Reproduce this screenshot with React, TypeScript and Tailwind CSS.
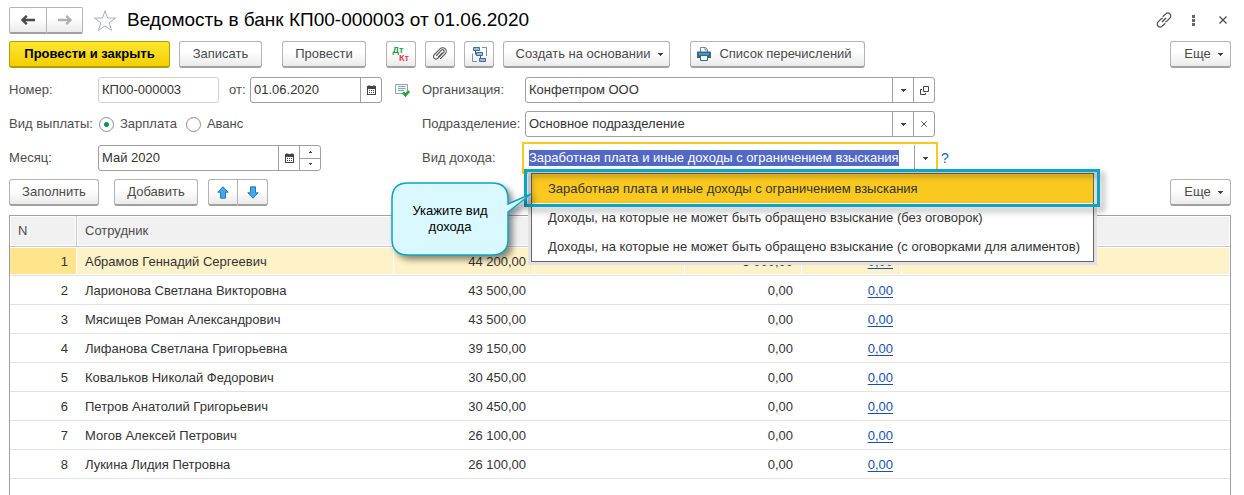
import { ReactNode } from 'react'
import clsx from 'clsx'

interface IEmployeeRow {
  name: string
  amount: string
  withheld: string
  link: string
}

const employees: IEmployeeRow[] = [
  { name: 'Абрамов Геннадий Сергеевич', amount: '44 200,00', withheld: '3 000,00', link: '0,00' },
  { name: 'Ларионова Светлана Викторовна', amount: '43 500,00', withheld: '0,00', link: '0,00' },
  { name: 'Мясищев Роман Александрович', amount: '43 500,00', withheld: '0,00', link: '0,00' },
  { name: 'Лифанова Светлана Григорьевна', amount: '39 150,00', withheld: '0,00', link: '0,00' },
  { name: 'Ковальков Николай Федорович', amount: '30 450,00', withheld: '0,00', link: '0,00' },
  { name: 'Петров Анатолий Григорьевич', amount: '30 450,00', withheld: '0,00', link: '0,00' },
  { name: 'Могов Алексей Петрович', amount: '26 100,00', withheld: '0,00', link: '0,00' },
  { name: 'Лукина Лидия Петровна', amount: '26 100,00', withheld: '0,00', link: '0,00' },
]

const incomeKinds = [
  'Заработная плата и иные доходы с ограничением взыскания',
  'Доходы, на которые не может быть обращено взыскание (без оговорок)',
  'Доходы, на которые не может быть обращено взыскание (с оговорками для алиментов)',
]

const buttonFace =
  'flex h-[27px] items-center justify-center border border-b-2 border-[#b3b3b3] border-b-[#a0a0a0] bg-linear-to-b from-white from-40% to-[#ebebeb] text-[#4a4a4a]'

// Icons

function Caret() {
  return (
    <svg width="5" height="3" viewBox="0 0 5 3" fill="#444" className="shrink-0">
      <path d="M0 0h5v1H4v1H3v1H2V2H1V1H0z" />
    </svg>
  )
}

function ArrowIcon({ className }: { className?: string }) {
  return (
    <svg width="14" height="10" viewBox="0 0 14 10" className={className}>
      <path d="M1.200 5H14M5.800 .8L1.500 5l4.300 4.200" fill="none" stroke="currentColor" strokeWidth="2.400" />
    </svg>
  )
}

function StarIcon() {
  return (
    <svg width="24" height="23" viewBox="0 0 24 23" fill="none" stroke="#a9afb5">
      <path d="M12 1.800l2.500 7.200 8 .1-6.400 4.700 2.500 7.700L12 16.900l-6.600 4.600 2.500-7.700L1.500 9.100l8-.1z" />
    </svg>
  )
}

function LinkIcon() {
  return (
    <svg width="16" height="16" viewBox="0 0 16 16" fill="none" stroke="#4d4d4d" strokeWidth="1.200">
      <path d="M6.700 4.700l2.800-2.600c1.400-1.300 3-1.500 4.300-.3s1.300 3 0 4.300l-2.600 2.700c-.6.600-1.200.8-2 .8" />
      <path d="M9.300 11.300l-2.800 2.600c-1.400 1.300-3 1.500-4.300.3s-1.300-3 0-4.300l2.600-2.700c.6-.6 1.200-.8 2-.8" />
      <path d="M6 10l4-4" />
    </svg>
  )
}

function DotsIcon() {
  return (
    <svg width="3" height="11" viewBox="0 0 3 11" fill="#666">
      <path d="M0 0h3v3H0zM0 4h3v3H0zM0 8h3v3H0z" />
    </svg>
  )
}

function CrossIcon({ size }: { size: number }) {
  return (
    <svg width={size} height={size} viewBox="0 0 8 8" stroke="#4d4d4d" strokeWidth="1.300">
      <path d="M.5 .5l7 7M7.500 .5l-7 7" />
    </svg>
  )
}

function ClipIcon() {
  return (
    <svg width="14" height="14" viewBox="0 0 14 14" fill="none" stroke="#555" strokeWidth="1.100" strokeLinecap="round">
      <path d="M3.500 8.500l5-5.300a1.500 1.500 0 0 1 2.200 2.100L5 11.200a2.500 2.500 0 0 1-3.700-3.500L7 1.800a3.600 3.600 0 0 1 5.200 5L7.500 11.700" />
      <path d="M9.300 5.800l-3.800 4" />
    </svg>
  )
}

function StructureIcon() {
  return (
    <svg width="15" height="15" viewBox="0 0 15 15" fill="#9dbcdb" stroke="#3f6c9c">
      <path d="M3.500 3.500v4h2M8.500 9v3" fill="none" />
      <path d="M1.500 .5h6v3h-6zM4.500 5.500h6v3h-6zM7.500 11.500h6v3h-6z" />
      <path d="M10 .5h4.500V9M5 14.500H.5V6.500" fill="none" stroke="#6d95ad" />
    </svg>
  )
}

function PrinterIcon() {
  return (
    <svg width="14" height="14" viewBox="0 0 14 14">
      <path d="M3.500 5V.5h5l2 2V5" fill="#fff" stroke="#6b8ba0" />
      <path d="M8 .5V3h2.500" fill="none" stroke="#6b8ba0" />
      <path d="M1 4.500h12a1 1 0 0 1 1 1V11H0V5.500a1 1 0 0 1 1-1z" fill="#2f6b8e" />
      <path d="M2 7h10" stroke="#8fb9d0" />
      <path d="M3.500 8.500h7v5h-7z" fill="#fff" stroke="#2f6b8e" />
    </svg>
  )
}

function CalendarIcon() {
  return (
    <svg width="9" height="10" viewBox="0 0 9 10" fill="#444">
      <path d="M0 1h9v9H0zM1 4v5h7V4z" fillRule="evenodd" />
      <path d="M1.500 0h1v1h-1zM6.500 0h1v1h-1zM2 5h1v1H2zM4 5h1v1H4zM6 5h1v1H6zM2 7h1v1H2zM4 7h1v1H4zM6 7h1v1H6z" />
    </svg>
  )
}

function StatusIcon() {
  return (
    <svg width="15" height="13" viewBox="0 0 15 13" fill="none">
      <path d="M.5 .5h12v9H.5z" fill="#f4f8fa" stroke="#8fa3b0" />
      <path d="M3 2.500h7.500M3 4.500h7.500M3 6.500h6" stroke="#8fa3b0" />
      <path d="M8 8.500l2.500 2.700L14.200 7" stroke="#1fa63c" strokeWidth="2.600" />
    </svg>
  )
}

function OpenIcon() {
  return (
    <svg width="9" height="9" viewBox="0 0 9 9" fill="none" stroke="#444">
      <path d="M3.500 .5h5v5h-5zM2 3.500H.5v5h5V7" />
    </svg>
  )
}

function BlueArrow({ down = false }: { down?: boolean }) {
  return (
    <svg width="12" height="13" viewBox="0 0 12 13" className={clsx(down && 'rotate-180')}>
      <path d="M6 .8l5.200 5.400H8.500v6h-5v-6H.8z" fill="#3fa9f0" stroke="#2b79b5" strokeLinejoin="round" />
    </svg>
  )
}

// Building blocks

function Button({ className, label, children }: { className?: string; label?: string; children: ReactNode }) {
  return (
    <button type="button" aria-label={label} className={clsx(buttonFace, 'shrink-0 rounded-[3px]', className)}>
      {children}
    </button>
  )
}

function Addon({ label, children }: { label: string; children: ReactNode }) {
  return (
    <button
      type="button"
      aria-label={label}
      className="flex w-[21px] shrink-0 items-center justify-center border-l border-[#a0a0a0]"
    >
      {children}
    </button>
  )
}

interface IFieldProps {
  id: string
  value: string
  className?: string
  children?: ReactNode
}

function Field({ id, value, className, children }: IFieldProps) {
  return (
    <div className={clsx('flex h-[26px] rounded-[3px] border bg-white', className ?? 'border-[#a0a0a0]')}>
      <input id={id} defaultValue={value} className="w-full min-w-0 flex-1 pl-[3px] text-[#333] outline-none" />
      {children}
    </div>
  )
}

function Hint() {
  return (
    <div className="absolute -left-[132px] top-[35px] z-20 h-[84px] w-[150px]">
      <svg
        width="150"
        height="84"
        viewBox="0 0 150 84"
        className="absolute inset-0 drop-shadow-[4px_4px_3px_rgba(0,0,0,0.45)]"
      >
        <path
          d="M18 3H102Q118 3 118 19V24L141 14L118 32V59Q118 75 102 75H18Q2 75 2 59V19Q2 3 18 3Z"
          fill="#d9f8ff"
          stroke="#0aa5c4"
          strokeWidth="1.500"
        />
      </svg>
      <p className="relative w-[120px] pt-[23px] text-center leading-4 text-black">
        Укажите вид
        <br />
        дохода
      </p>
    </div>
  )
}

function IncomeKindField() {
  return (
    <div className="relative -ml-[3px] w-[416px]">
      <div className="-my-[3px] flex h-[32px] border-2 border-[#fac91f] bg-white p-px">
        <div className="flex flex-1 items-center pl-1">
          <input
            id="income-kind"
            role="combobox"
            aria-expanded="true"
            aria-controls="income-kinds"
            defaultValue={incomeKinds[0]}
            className="field-sizing-content h-4 bg-[#5268c4] text-white outline-none"
          />
        </div>
        <Addon label="Выбрать">
          <Caret />
        </Addon>
      </div>
      <ul
        id="income-kinds"
        role="listbox"
        className="absolute left-[9px] top-[28px] z-10 w-[563px] border border-[#666] bg-white shadow-[0_0_0_3px_#e2e2e4]"
      >
        {incomeKinds.map((kind, i) => (
          <li
            key={kind}
            role="option"
            aria-selected={i === 0}
            className={clsx('h-[29px] pl-4 leading-[29px] whitespace-nowrap text-[#333]', i === 0 && 'bg-[#fac91f]')}
          >
            {kind}
          </li>
        ))}
      </ul>
      <div className="absolute left-[2px] top-[24px] z-10 h-[38px] w-[576px] border-3 border-[#0aa5c4] drop-shadow-[4px_4px_3px_rgba(0,0,0,0.4)]" />
      <Hint />
    </div>
  )
}

function Radio({ label, checked }: { label: string; checked?: boolean }) {
  return (
    <label className="flex items-center gap-[6px]">
      <input
        type="radio"
        name="payment"
        defaultChecked={checked}
        className="size-[15px] appearance-none rounded-full border border-[#8c8c8c] bg-white checked:bg-[radial-gradient(circle,#0a9648_2px,white_3px)]"
      />
      {label}
    </label>
  )
}

function TitleBar() {
  return (
    <header className="flex h-[26px] items-center">
      <div className="flex">
        <button type="button" aria-label="Назад" className={clsx(buttonFace, 'h-[26px] w-[38px] rounded-l-[2px]')}>
          <ArrowIcon className="text-[#4a4a4a]" />
        </button>
        <button
          type="button"
          aria-label="Вперед"
          className={clsx(buttonFace, 'h-[26px] w-[36px] rounded-r-[2px] border-l-0')}
        >
          <ArrowIcon className="rotate-180 text-[#b0b0b0]" />
        </button>
      </div>
      <button type="button" aria-label="В избранное" className="ml-[10px]">
        <StarIcon />
      </button>
      <h1 className="ml-[10px] text-[19px] whitespace-nowrap text-black">Ведомость в банк КП00-000003 от 01.06.2020</h1>
      <div className="mr-1 ml-auto flex items-center gap-[20px]">
        <button type="button" aria-label="Получить ссылку">
          <LinkIcon />
        </button>
        <button type="button" aria-label="Меню">
          <DotsIcon />
        </button>
        <button type="button" aria-label="Закрыть" className="ml-1">
          <CrossIcon size={8} />
        </button>
      </div>
    </header>
  )
}

function Toolbar() {
  return (
    <div className="mt-2 flex gap-[9px]">
      <button
        type="button"
        className="h-[27px] w-[161px] rounded-[3px] border border-b-2 border-[#b39b00] bg-linear-to-b from-[#ffe629] to-[#f2cf00] font-bold whitespace-nowrap text-black"
      >
        Провести и закрыть
      </button>
      <Button className="w-[83px]">Записать</Button>
      <Button className="mx-[11px] w-[84px]">Провести</Button>
      <Button className="w-[30px]" label="Дт Кт">
        <span className="flex flex-col text-[9px] leading-[8px] font-bold">
          <span className="pr-[6px] text-[#1d9a4c]">Дт</span>
          <span className="pl-[6px] text-[#dc3a41]">Кт</span>
        </span>
      </Button>
      <Button className="w-[30px]" label="Файлы">
        <ClipIcon />
      </Button>
      <Button className="w-[30px]" label="Структура подчиненности">
        <StructureIcon />
      </Button>
      <Button className="w-[167px] gap-2 pl-[6px]">
        Создать на основании
        <Caret />
      </Button>
      <Button className="ml-[11px] w-[175px] gap-2 pr-[6px]">
        <PrinterIcon />
        Список перечислений
      </Button>
      <Button className="ml-auto w-[61px] gap-[7px] pl-[6px]">
        Еще
        <Caret />
      </Button>
    </div>
  )
}

function DocumentForm() {
  return (
    <div className="mt-[9px] flex">
      <div className="flex w-[413px] shrink-0 flex-col gap-2">
        <div className="flex items-center">
          <label htmlFor="number" className="w-[89px]">
            Номер:
          </label>
          <div className="w-[121px]">
            <Field id="number" value="КП00-000003" className="border-[#d0d0d0]" />
          </div>
          <label htmlFor="date" className="w-[31px] pl-[10px]">
            от:
          </label>
          <div className="w-[132px]">
            <Field id="date" value="01.06.2020">
              <Addon label="Календарь">
                <CalendarIcon />
              </Addon>
            </Field>
          </div>
          <span className="ml-[13px]">
            <StatusIcon />
          </span>
        </div>
        <div role="radiogroup" aria-label="Вид выплаты" className="flex h-[26px] items-center">
          <span className="w-[90px]">Вид выплаты:</span>
          <div className="flex gap-[9px]">
            <Radio label="Зарплата" checked />
            <Radio label="Аванс" />
          </div>
        </div>
        <div className="flex items-center">
          <label htmlFor="month" className="w-[89px]">
            Месяц:
          </label>
          <div className="w-[223px]">
            <Field id="month" value="Май 2020">
              <Addon label="Календарь">
                <CalendarIcon />
              </Addon>
              <div className="flex w-[21px] flex-col border-l border-[#a0a0a0]">
                <button type="button" aria-label="Больше" className="flex flex-1 items-center justify-center">
                  <svg width="3" height="2" viewBox="0 0 3 2" fill="#444">
                    <path d="M0 2h3V1H2V0H1v1H0z" />
                  </svg>
                </button>
                <button
                  type="button"
                  aria-label="Меньше"
                  className="flex flex-1 items-center justify-center border-t border-[#a0a0a0]"
                >
                  <svg width="3" height="2" viewBox="0 0 3 2" fill="#444">
                    <path d="M0 0h3v1H2v1H1V1H0z" />
                  </svg>
                </button>
              </div>
            </Field>
          </div>
        </div>
      </div>

      <div className="grid auto-rows-[26px] grid-cols-[103px_410px] gap-y-2">
        <label htmlFor="organization" className="self-center">
          Организация:
        </label>
        <Field id="organization" value="Конфетпром ООО">
          <Addon label="Выбрать">
            <Caret />
          </Addon>
          <Addon label="Открыть">
            <OpenIcon />
          </Addon>
        </Field>
        <label htmlFor="department" className="self-center">
          Подразделение:
        </label>
        <Field id="department" value="Основное подразделение">
          <Addon label="Выбрать">
            <Caret />
          </Addon>
          <Addon label="Очистить">
            <CrossIcon size={6} />
          </Addon>
        </Field>
        <label htmlFor="income-kind" className="self-center">
          Вид дохода:
        </label>
        <IncomeKindField />
      </div>
      <button type="button" aria-label="Справка" className="ml-[6px] h-[26px] self-end text-[14px] text-[#0a70b8]">
        ?
      </button>
    </div>
  )
}

function TableToolbar() {
  return (
    <div className="mt-2 flex">
      <Button className="w-[90px]">Заполнить</Button>
      <Button className="ml-[15px] w-[84px]">Добавить</Button>
      <div className="ml-[10px] flex">
        <button type="button" aria-label="Вверх" className={clsx(buttonFace, 'w-[30px] rounded-l-[3px]')}>
          <BlueArrow />
        </button>
        <button type="button" aria-label="Вниз" className={clsx(buttonFace, 'w-[30px] rounded-r-[3px] border-l-0')}>
          <BlueArrow down />
        </button>
      </div>
      <Button className="ml-auto w-[61px] gap-[7px] pl-[6px]">
        Еще
        <Caret />
      </Button>
    </div>
  )
}

function EmployeesTable() {
  return (
    <div className="mt-[9px] flex-1 border border-b-0 border-[#a0a0a0]">
      <table className="w-full table-fixed border-separate border-spacing-0 text-[#333]">
        <colgroup>
          <col className="w-[67px]" />
          <col className="w-[317px]" />
          <col className="w-[141px]" />
          <col className="w-[150px]" />
          <col className="w-[117px]" />
          <col className="w-[100px]" />
          <col />
        </colgroup>
        <thead>
          <tr className="h-[31px] text-left text-[#4d4d4d] *:border-b *:border-[#c8c8c8] *:bg-[#f1f1f1] *:inset-ring *:inset-ring-white">
            <th className="border-r pl-2 font-normal">N</th>
            <th className="pl-2 font-normal">Сотрудник</th>
            <th colSpan={5} />
          </tr>
        </thead>
        <tbody>
          {employees.map((row, i) => (
            <tr
              key={row.name}
              className={clsx(
                'h-[29px] *:border-b *:border-[#e2e2e2] *:pt-[2px] *:pr-[9px]',
                i === 0 && '*:bg-[#fef2c8] *:shadow-[inset_-1px_-1px_white,inset_0_1px_white]',
              )}
            >
              <td className={clsx('text-right', i === 0 && 'bg-[#ffe48c]!')}>{i + 1}</td>
              <td className="pl-2">{row.name}</td>
              <td className="text-right">{row.amount}</td>
              <td />
              <td className="text-right">{row.withheld}</td>
              <td className="text-right">
                <a href="#" className="text-[#1a50b0] underline underline-offset-2">
                  {row.link}
                </a>
              </td>
              <td />
            </tr>
          ))}
        </tbody>
      </table>
    </div>
  )
}

export default function App() {
  return (
    <main className="flex min-h-screen flex-col bg-white pt-[7px] pr-[13px] pl-[9px] font-['Liberation_Sans',Arial,sans-serif] text-[13px] leading-4 text-[#4d4d4d]">
      <TitleBar />
      <Toolbar />
      <DocumentForm />
      <TableToolbar />
      <EmployeesTable />
    </main>
  )
}
